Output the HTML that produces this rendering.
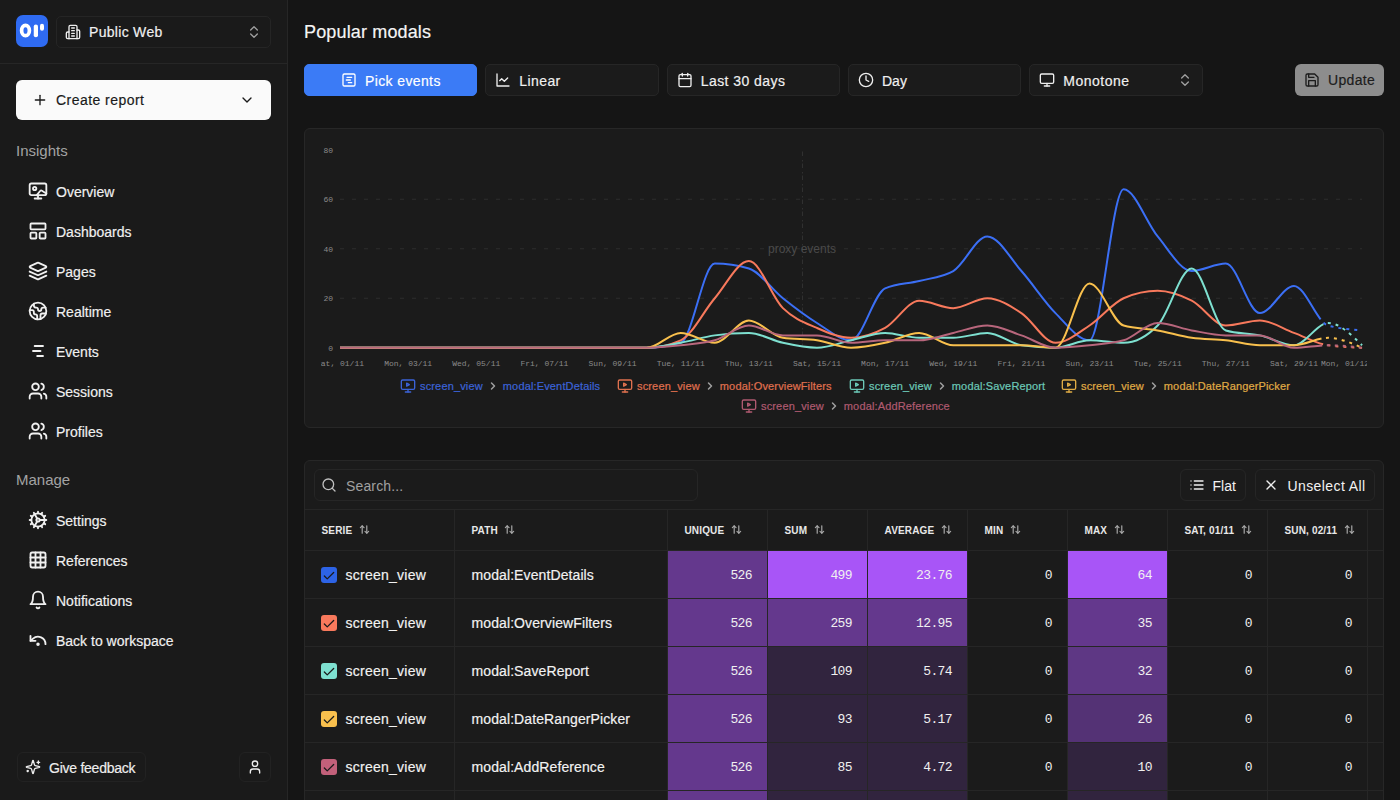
<!DOCTYPE html><html><head><meta charset="utf-8"><style>
*{box-sizing:border-box;margin:0;padding:0}
html,body{width:1400px;height:800px;overflow:hidden;background:#151515;font-family:"Liberation Sans",sans-serif;color:#f2f2f2}
.nav .t,.proj .t,.create .t,.btn .t,.upd .t,.fb .t,#title,.sw{-webkit-text-stroke:0.18px currentColor}
.abs{position:absolute}
svg{display:block}
#side{position:absolute;left:0;top:0;width:288px;height:800px;background:#1a1a1a;border-right:1px solid #262626}
#side .hdr{position:absolute;left:0;top:0;width:287px;height:64px;border-bottom:1px solid #262626}
.logo{position:absolute;left:16px;top:15px;width:32px;height:32px;background:#2f6bf2;border-radius:7px}
.proj{position:absolute;left:56px;top:16px;width:215px;height:32px;border:1px solid #252525;border-radius:5px;background:#1a1a1a}
.proj .ic{position:absolute;left:8px;top:7px;color:#eee}
.proj .t{position:absolute;left:32px;top:6px;font-size:14px;line-height:18px;color:#f0f0f0;letter-spacing:0.3px}
.proj .ud{position:absolute;right:8px;top:6.5px;color:#a0a0a0}
.create{position:absolute;left:16px;top:80px;width:255px;height:40px;background:#fafafa;border-radius:6px;color:#1a1a1a}
.create .ic{position:absolute;left:16px;top:12px}
.create .t{position:absolute;left:40px;top:11px;font-size:14px;line-height:18px}
.create .cd{position:absolute;right:16px;top:12px}
.sec{position:absolute;left:16px;font-size:15px;line-height:18px;color:#a3a3a3}
.nav{position:absolute;left:28px;height:20px}
.nav .ic{position:absolute;left:0;top:0;color:#f0f0f0}
.nav .t{position:absolute;left:28px;top:1.5px;font-size:14px;line-height:18px;color:#f0f0f0;white-space:nowrap}
.fb{position:absolute;left:17px;top:752px;width:129px;height:30px;border:1px solid #222;border-radius:6px}
.fb .ic{position:absolute;left:7px;top:6px;color:#eee}
.fb .t{position:absolute;left:31px;top:6px;font-size:14px;line-height:18px;color:#eee}
.usr{position:absolute;left:239px;top:752px;width:32px;height:30px;border:1px solid #222;border-radius:6px}
.usr .ic{position:absolute;left:7px;top:6px;color:#eee}
#title{position:absolute;left:304px;top:21px;font-size:18px;line-height:22px;color:#f5f5f5;letter-spacing:0.15px}
.btn{position:absolute;top:64px;height:32px;width:173.33px;border:1px solid #262626;border-radius:5px;background:#1b1b1b}
.btn .ic{position:absolute;left:9px;top:7px;color:#eee}
.btn .t{position:absolute;left:33px;top:7px;font-size:14px;line-height:18px;color:#f0f0f0}
.btn .ud{position:absolute;right:8.5px;top:7px;color:#a0a0a0}
.btn.pri{background:#3b7bf6;border-color:#3b7bf6}
.btn.pri .ic{left:36px;color:#fff}
.btn.pri .t{left:60px;color:#fff}
.upd{position:absolute;left:1295px;top:64px;width:89px;height:32px;border-radius:6px;background:#8d8d8d;color:#1c1c1c}
.upd .ic{position:absolute;left:9px;top:8px}
.upd .t{position:absolute;left:33px;top:7px;font-size:14px;line-height:18px}
.card{position:absolute;background:#1b1b1b;border:1px solid #272727;border-radius:6px;overflow:hidden}
.mono{font-family:"Liberation Mono",monospace}
.leg{position:absolute;height:16px;display:flex;align-items:center;font-size:11px;white-space:nowrap;-webkit-text-stroke:0.2px currentColor;letter-spacing:0.15px}
.tb{position:absolute;border-collapse:collapse}
.th,.td{position:absolute;border-right:1px solid #262626}
.hcell{position:absolute;top:0;height:40px;border-right:1px solid #262626;font-size:10px;font-weight:bold;color:#e8e8e8}
.hcell .t{position:absolute;left:16.5px;top:14px;line-height:12px;white-space:nowrap;letter-spacing:0.15px}
.cell{position:absolute;height:47px;border-right:1px solid #262626;background-clip:padding-box}
.num{font-family:"Liberation Mono",monospace;font-size:13px;letter-spacing:-0.6px;color:#f0f0f0;text-align:right;padding-right:15px;padding-top:1px;line-height:47px}
</style></head><body>
<div id="side"><div class="hdr"></div>
<div class="logo"><svg width="32" height="32" viewBox="0 0 32 32"><ellipse cx="9.5" cy="15.5" rx="3.9" ry="5.2" fill="none" stroke="#fff" stroke-width="3.7"/><rect x="17.75" y="9.5" width="4.25" height="12.75" rx="2.1" fill="#fff"/><rect x="24" y="8.75" width="4" height="7" rx="2" fill="#fff"/></svg></div>
<div class="proj"><div class="ic"><svg width="16" height="16" viewBox="0 0 24 24" fill="none" stroke="currentColor" stroke-width="2" stroke-linecap="round" stroke-linejoin="round" ><path d="M6 22V4a2 2 0 0 1 2-2h8a2 2 0 0 1 2 2v18Z"/><path d="M6 12H4a2 2 0 0 0-2 2v6a2 2 0 0 0 2 2h2"/><path d="M18 9h2a2 2 0 0 1 2 2v9a2 2 0 0 1-2 2h-2"/><path d="M10 6h4"/><path d="M10 10h4"/><path d="M10 14h4"/><path d="M10 18h4"/></svg></div><div class="t">Public Web</div><div class="ud"><svg width="16" height="16" viewBox="0 0 24 24" fill="none" stroke="currentColor" stroke-width="2" stroke-linecap="round" stroke-linejoin="round" ><path d="m7 15 5 5 5-5"/><path d="m7 9 5-5 5 5"/></svg></div></div>
<div class="create"><div class="ic"><svg width="16" height="16" viewBox="0 0 24 24" fill="none" stroke="currentColor" stroke-width="2" stroke-linecap="round" stroke-linejoin="round" ><path d="M5 12h14"/><path d="M12 5v14"/></svg></div><div class="t" style="letter-spacing:0.45px">Create report</div><div class="cd"><svg width="16" height="16" viewBox="0 0 24 24" fill="none" stroke="currentColor" stroke-width="2" stroke-linecap="round" stroke-linejoin="round" ><path d="m6 9 6 6 6-6"/></svg></div></div>
<div class="sec" style="top:142px">Insights</div>
<div class="nav" style="top:181px"><div class="ic"><svg width="20" height="20" viewBox="0 0 24 24" fill="none" stroke="currentColor" stroke-width="2.2" stroke-linecap="round" stroke-linejoin="round" ><rect width="20" height="14" x="2" y="3" rx="2"/><circle cx="8" cy="9" r="2"/><path d="m10.5 17 4.3-5.3a1.2 1.2 0 0 1 1.9 0L22 15"/><path d="M8 21h8"/><path d="M12 17v4"/></svg></div><div class="t">Overview</div></div>
<div class="nav" style="top:221px"><div class="ic"><svg width="20" height="20" viewBox="0 0 24 24" fill="none" stroke="currentColor" stroke-width="2.2" stroke-linecap="round" stroke-linejoin="round" ><rect width="18" height="7" x="3" y="3" rx="1"/><rect width="7" height="7" x="3" y="14" rx="1"/><rect width="7" height="7" x="14" y="14" rx="1"/></svg></div><div class="t">Dashboards</div></div>
<div class="nav" style="top:261px"><div class="ic"><svg width="20" height="20" viewBox="0 0 24 24" fill="none" stroke="currentColor" stroke-width="2.2" stroke-linecap="round" stroke-linejoin="round" ><path d="m12.83 2.18a2 2 0 0 0-1.66 0L2.6 6.08a1 1 0 0 0 0 1.83l8.58 3.91a2 2 0 0 0 1.66 0l8.58-3.9a1 1 0 0 0 0-1.83Z"/><path d="m22 17.65-9.17 4.16a2 2 0 0 1-1.66 0L2 17.65"/><path d="m22 12.65-9.17 4.16a2 2 0 0 1-1.66 0L2 12.65"/></svg></div><div class="t">Pages</div></div>
<div class="nav" style="top:301px"><div class="ic"><svg width="20" height="20" viewBox="0 0 24 24" fill="none" stroke="currentColor" stroke-width="2.2" stroke-linecap="round" stroke-linejoin="round" ><path d="M21.54 15H17a2 2 0 0 0-2 2v4.54"/><path d="M7 3.34V5a3 3 0 0 0 3 3a2 2 0 0 1 2 2c0 1.1.9 2 2 2a2 2 0 0 0 2-2c0-1.1.9-2 2-2h3.17"/><path d="M11 21.95V18a2 2 0 0 0-2-2a2 2 0 0 1-2-2v-1a2 2 0 0 0-2-2H2.05"/><circle cx="12" cy="12" r="10"/></svg></div><div class="t">Realtime</div></div>
<div class="nav" style="top:341px"><div class="ic"><svg width="20" height="20" viewBox="0 0 24 24" fill="none" stroke="currentColor" stroke-width="2.2" stroke-linecap="round" stroke-linejoin="round" ><path d="M8 6h10"/><path d="M6 12h9"/><path d="M11 18h7"/></svg></div><div class="t">Events</div></div>
<div class="nav" style="top:381px"><div class="ic"><svg width="20" height="20" viewBox="0 0 24 24" fill="none" stroke="currentColor" stroke-width="2.2" stroke-linecap="round" stroke-linejoin="round" ><path d="M16 21v-2a4 4 0 0 0-4-4H6a4 4 0 0 0-4 4v2"/><circle cx="9" cy="7" r="4"/><path d="M22 21v-2a4 4 0 0 0-3-3.87"/><path d="M16 3.13a4 4 0 0 1 0 7.75"/></svg></div><div class="t">Sessions</div></div>
<div class="nav" style="top:421px"><div class="ic"><svg width="20" height="20" viewBox="0 0 24 24" fill="none" stroke="currentColor" stroke-width="2.2" stroke-linecap="round" stroke-linejoin="round" ><path d="M16 21v-2a4 4 0 0 0-4-4H6a4 4 0 0 0-4 4v2"/><circle cx="9" cy="7" r="4"/><path d="M22 21v-2a4 4 0 0 0-3-3.87"/><path d="M16 3.13a4 4 0 0 1 0 7.75"/></svg></div><div class="t">Profiles</div></div>
<div class="sec" style="top:471px">Manage</div>
<div class="nav" style="top:510px"><div class="ic"><svg width="20" height="20" viewBox="0 0 24 24" fill="none" stroke="currentColor" stroke-width="2.2" stroke-linecap="round" stroke-linejoin="round" ><path d="M12 20a8 8 0 1 0 0-16 8 8 0 0 0 0 16Z"/><path d="M12 14a2 2 0 1 0 0-4 2 2 0 0 0 0 4Z"/><path d="M12 2v2"/><path d="M12 22v-2"/><path d="m17 20.66-1-1.73"/><path d="M11 10.27 7 3.34"/><path d="m20.66 17-1.73-1"/><path d="m3.34 7 1.73 1"/><path d="M14 12h8"/><path d="M2 12h2"/><path d="m20.66 7-1.73 1"/><path d="m3.34 17 1.73-1"/><path d="m17 3.34-1 1.73"/><path d="m11 13.73-4 6.93"/></svg></div><div class="t">Settings</div></div>
<div class="nav" style="top:550px"><div class="ic"><svg width="20" height="20" viewBox="0 0 24 24" fill="none" stroke="currentColor" stroke-width="2.2" stroke-linecap="round" stroke-linejoin="round" ><rect width="18" height="18" x="3" y="3" rx="2"/><path d="M3 9h18"/><path d="M3 15h18"/><path d="M9 3v18"/><path d="M15 3v18"/></svg></div><div class="t">References</div></div>
<div class="nav" style="top:590px"><div class="ic"><svg width="20" height="20" viewBox="0 0 24 24" fill="none" stroke="currentColor" stroke-width="2.2" stroke-linecap="round" stroke-linejoin="round" ><path d="M6 8a6 6 0 0 1 12 0c0 7 3 9 3 9H3s3-2 3-9"/><path d="M10.3 21a1.94 1.94 0 0 0 3.4 0"/></svg></div><div class="t">Notifications</div></div>
<div class="nav" style="top:630px"><div class="ic"><svg width="20" height="20" viewBox="0 0 24 24" fill="none" stroke="currentColor" stroke-width="2.2" stroke-linecap="round" stroke-linejoin="round" ><path d="M21 17a9 9 0 0 0-15-6.7L3 13"/><path d="M3 7v6h6"/><circle cx="12" cy="17" r="1"/></svg></div><div class="t">Back to workspace</div></div>
<div class="fb"><div class="ic"><svg width="16" height="16" viewBox="0 0 24 24" fill="none" stroke="currentColor" stroke-width="2" stroke-linecap="round" stroke-linejoin="round" ><path d="M9.937 15.5A2 2 0 0 0 8.5 14.063l-6.135-1.582a.5.5 0 0 1 0-.962L8.5 9.936A2 2 0 0 0 9.937 8.5l1.582-6.135a.5.5 0 0 1 .963 0L14.063 8.5A2 2 0 0 0 15.5 9.937l6.135 1.581a.5.5 0 0 1 0 .964L15.5 14.063a2 2 0 0 0-1.437 1.437l-1.582 6.135a.5.5 0 0 1-.963 0z"/><path d="M20 3v4"/><path d="M22 5h-4"/><path d="M4 17v2"/><path d="M5 18H3"/></svg></div><div class="t" style="letter-spacing:-0.25px">Give feedback</div></div>
<div class="usr"><div class="ic"><svg width="16" height="16" viewBox="0 0 24 24" fill="none" stroke="currentColor" stroke-width="2" stroke-linecap="round" stroke-linejoin="round" ><path d="M19 21v-2a4 4 0 0 0-4-4H9a4 4 0 0 0-4 4v2"/><circle cx="12" cy="7" r="4"/></svg></div></div>
</div>
<div id="title">Popular modals</div>
<div class="btn pri" style="left:304.00px"><div class="ic"><svg width="16" height="16" viewBox="0 0 24 24" fill="none" stroke="currentColor" stroke-width="2" stroke-linecap="round" stroke-linejoin="round" ><rect width="18" height="18" x="3" y="3" rx="2"/><path d="M9 8h7"/><path d="M8 12h6"/><path d="M11 16h5"/></svg></div><div class="t" style="letter-spacing:0.38px">Pick events</div></div>
<div class="btn" style="left:485.33px"><div class="ic"><svg width="16" height="16" viewBox="0 0 24 24" fill="none" stroke="currentColor" stroke-width="2" stroke-linecap="round" stroke-linejoin="round" ><path d="M3 3v18h18"/><path d="m19 9-5 5-4-4-3 3"/></svg></div><div class="t" style="letter-spacing:0.4px">Linear</div></div>
<div class="btn" style="left:666.67px"><div class="ic"><svg width="16" height="16" viewBox="0 0 24 24" fill="none" stroke="currentColor" stroke-width="2" stroke-linecap="round" stroke-linejoin="round" ><rect width="18" height="18" x="3" y="4" rx="2"/><path d="M16 2v4"/><path d="M8 2v4"/><path d="M3 10h18"/></svg></div><div class="t" style="letter-spacing:0.45px">Last 30 days</div></div>
<div class="btn" style="left:848.00px"><div class="ic"><svg width="16" height="16" viewBox="0 0 24 24" fill="none" stroke="currentColor" stroke-width="2" stroke-linecap="round" stroke-linejoin="round" ><circle cx="12" cy="12" r="10"/><path d="M12 6v6l4 2"/></svg></div><div class="t" style="letter-spacing:0px">Day</div></div>
<div class="btn" style="left:1029.33px"><div class="ic"><svg width="16" height="16" viewBox="0 0 24 24" fill="none" stroke="currentColor" stroke-width="2" stroke-linecap="round" stroke-linejoin="round" ><rect width="20" height="14" x="2" y="3" rx="2"/><path d="M8 21h8"/><path d="M12 17v4"/></svg></div><div class="t" style="letter-spacing:0.5px">Monotone</div><div class="ud"><svg width="16" height="16" viewBox="0 0 24 24" fill="none" stroke="currentColor" stroke-width="2" stroke-linecap="round" stroke-linejoin="round" ><path d="m7 15 5 5 5-5"/><path d="m7 9 5-5 5 5"/></svg></div></div>
<div class="upd"><div class="ic"><svg width="16" height="16" viewBox="0 0 24 24" fill="none" stroke="currentColor" stroke-width="2" stroke-linecap="round" stroke-linejoin="round" ><path d="M19 21H5a2 2 0 0 1-2-2V5a2 2 0 0 1 2-2h11l5 5v11a2 2 0 0 1-2 2z"/><path d="M17 21v-8H7v8"/><path d="M7 3v5h8"/></svg></div><div class="t" style="letter-spacing:0.35px">Update</div></div>
<div class="card" style="left:304px;top:128px;width:1080px;height:300px"></div>
<svg class="abs" style="left:0;top:0" width="1400" height="440" viewBox="0 0 1400 440">
<line x1="340" x2="1362" y1="298.25" y2="298.25" stroke="#2e2e2e" stroke-width="1" stroke-dasharray="4 8"/>
<line x1="340" x2="1362" y1="248.75" y2="248.75" stroke="#2e2e2e" stroke-width="1" stroke-dasharray="4 8"/>
<line x1="340" x2="1362" y1="199.25" y2="199.25" stroke="#2e2e2e" stroke-width="1" stroke-dasharray="4 8"/>
<line x1="802.5" x2="802.5" y1="151.5" y2="347" stroke="#303030" stroke-width="1" stroke-dasharray="4.5 4 1.5 2"/>
<text x="802" y="253" text-anchor="middle" font-family="Liberation Sans" font-size="12" fill="#4a4a4a">proxy events</text>
<text x="333" y="350.75" text-anchor="end" font-family="Liberation Mono" font-size="8" fill="#8a8a8a">0</text>
<text x="333" y="301.25" text-anchor="end" font-family="Liberation Mono" font-size="8" fill="#8a8a8a">20</text>
<text x="333" y="251.75" text-anchor="end" font-family="Liberation Mono" font-size="8" fill="#8a8a8a">40</text>
<text x="333" y="202.25" text-anchor="end" font-family="Liberation Mono" font-size="8" fill="#8a8a8a">60</text>
<text x="333" y="152.75" text-anchor="end" font-family="Liberation Mono" font-size="8" fill="#8a8a8a">80</text>
<clipPath id="xc"><rect x="321" y="350" width="1046" height="20"/></clipPath><g clip-path="url(#xc)">
<text x="340.00" y="366" text-anchor="middle" font-family="Liberation Mono" font-size="8" fill="#8a8a8a">Sat, 01/11</text>
<text x="408.14" y="366" text-anchor="middle" font-family="Liberation Mono" font-size="8" fill="#8a8a8a">Mon, 03/11</text>
<text x="476.28" y="366" text-anchor="middle" font-family="Liberation Mono" font-size="8" fill="#8a8a8a">Wed, 05/11</text>
<text x="544.42" y="366" text-anchor="middle" font-family="Liberation Mono" font-size="8" fill="#8a8a8a">Fri, 07/11</text>
<text x="612.56" y="366" text-anchor="middle" font-family="Liberation Mono" font-size="8" fill="#8a8a8a">Sun, 09/11</text>
<text x="680.70" y="366" text-anchor="middle" font-family="Liberation Mono" font-size="8" fill="#8a8a8a">Tue, 11/11</text>
<text x="748.84" y="366" text-anchor="middle" font-family="Liberation Mono" font-size="8" fill="#8a8a8a">Thu, 13/11</text>
<text x="816.98" y="366" text-anchor="middle" font-family="Liberation Mono" font-size="8" fill="#8a8a8a">Sat, 15/11</text>
<text x="885.12" y="366" text-anchor="middle" font-family="Liberation Mono" font-size="8" fill="#8a8a8a">Mon, 17/11</text>
<text x="953.26" y="366" text-anchor="middle" font-family="Liberation Mono" font-size="8" fill="#8a8a8a">Wed, 19/11</text>
<text x="1021.40" y="366" text-anchor="middle" font-family="Liberation Mono" font-size="8" fill="#8a8a8a">Fri, 21/11</text>
<text x="1089.54" y="366" text-anchor="middle" font-family="Liberation Mono" font-size="8" fill="#8a8a8a">Sun, 23/11</text>
<text x="1157.68" y="366" text-anchor="middle" font-family="Liberation Mono" font-size="8" fill="#8a8a8a">Tue, 25/11</text>
<text x="1225.82" y="366" text-anchor="middle" font-family="Liberation Mono" font-size="8" fill="#8a8a8a">Thu, 27/11</text>
<text x="1293.96" y="366" text-anchor="middle" font-family="Liberation Mono" font-size="8" fill="#8a8a8a">Sat, 29/11</text>
<text x="1369" y="366" text-anchor="end" font-family="Liberation Mono" font-size="8" fill="#8a8a8a">Mon, 01/12</text></g>
<path d="M340.00,347.75 C351.36,347.75 362.71,347.75 374.07,347.75 C385.43,347.75 396.78,347.75 408.14,347.75 C419.50,347.75 430.85,347.75 442.21,347.75 C453.57,347.75 464.92,347.75 476.28,347.75 C487.64,347.75 498.99,347.75 510.35,347.75 C521.71,347.75 533.06,347.75 544.42,347.75 C555.78,347.75 567.13,347.75 578.49,347.75 C589.85,347.75 601.20,347.75 612.56,347.75 C623.92,347.75 635.27,347.75 646.63,347.75 C657.99,347.75 669.34,346.10 680.70,342.80 C692.06,339.50 703.41,263.60 714.77,263.60 C726.13,263.60 737.48,265.25 748.84,268.55 C760.20,271.85 771.55,289.18 782.91,298.25 C794.27,307.32 805.62,315.99 816.98,323.00 C828.34,330.01 839.69,340.32 851.05,340.32 C862.41,340.32 873.76,293.30 885.12,288.35 C896.48,283.40 907.83,283.81 919.19,280.93 C930.55,278.04 941.90,277.62 953.26,271.02 C964.62,264.42 975.97,236.38 987.33,236.38 C998.69,236.38 1010.04,258.24 1021.40,271.02 C1032.76,283.81 1044.11,301.55 1055.47,313.10 C1066.83,324.65 1078.18,340.32 1089.54,340.32 C1100.90,340.32 1112.25,189.35 1123.61,189.35 C1134.97,189.35 1146.32,222.76 1157.68,236.38 C1169.04,249.99 1180.39,271.02 1191.75,271.02 C1203.11,271.02 1214.46,263.60 1225.82,263.60 C1237.18,263.60 1248.53,313.10 1259.89,313.10 C1271.25,313.10 1282.60,285.88 1293.96,285.88 C1305.32,285.88 1316.67,322.18 1328.03,325.48 C1339.39,328.78 1350.74,329.60 1362.10,330.43" fill="none" stroke="#3b6ff5" stroke-width="2" stroke-dasharray="1372.31 4.50 3.00 5.00 3.00 5.00 3.00 5.00 3.00 5.00 3.00 5.00 3.00 5.00 3.00 5.00 3.00 5.00 3.00 5.00 3.00 5.00 3.00 5.00 3.00 5.00 3.00 2000.00"/>
<path d="M340.00,347.75 C351.36,347.75 362.71,347.75 374.07,347.75 C385.43,347.75 396.78,347.75 408.14,347.75 C419.50,347.75 430.85,347.75 442.21,347.75 C453.57,347.75 464.92,347.75 476.28,347.75 C487.64,347.75 498.99,347.75 510.35,347.75 C521.71,347.75 533.06,347.75 544.42,347.75 C555.78,347.75 567.13,347.75 578.49,347.75 C589.85,347.75 601.20,347.75 612.56,347.75 C623.92,347.75 635.27,347.75 646.63,347.75 C657.99,347.75 669.34,345.27 680.70,340.32 C692.06,335.38 703.41,311.45 714.77,298.25 C726.13,285.05 737.48,261.12 748.84,261.12 C760.20,261.12 771.55,297.01 782.91,308.15 C794.27,319.29 805.62,323.00 816.98,327.95 C828.34,332.90 839.69,337.85 851.05,337.85 C862.41,337.85 873.76,334.14 885.12,327.95 C896.48,321.76 907.83,300.73 919.19,300.73 C930.55,300.73 941.90,308.15 953.26,308.15 C964.62,308.15 975.97,298.25 987.33,298.25 C998.69,298.25 1010.04,305.68 1021.40,313.10 C1032.76,320.53 1044.11,342.80 1055.47,342.80 C1066.83,342.80 1078.18,332.90 1089.54,325.48 C1100.90,318.05 1112.25,303.20 1123.61,298.25 C1134.97,293.30 1146.32,290.82 1157.68,290.82 C1169.04,290.82 1180.39,294.95 1191.75,300.73 C1203.11,306.50 1214.46,325.48 1225.82,325.48 C1237.18,325.48 1248.53,320.52 1259.89,320.52 C1271.25,320.52 1282.60,328.77 1293.96,332.90 C1305.32,337.02 1316.67,343.62 1328.03,345.27 C1339.39,346.93 1350.74,347.34 1362.10,347.75" fill="none" stroke="#f8795c" stroke-width="2" stroke-dasharray="1115.10 4.50 3.00 5.00 3.00 5.00 3.00 5.00 3.00 5.00 3.00 5.00 3.00 5.00 3.00 5.00 3.00 5.00 3.00 5.00 3.00 5.00 3.00 5.00 3.00 5.00 3.00 2000.00"/>
<path d="M340.00,347.75 C351.36,347.75 362.71,347.75 374.07,347.75 C385.43,347.75 396.78,347.75 408.14,347.75 C419.50,347.75 430.85,347.75 442.21,347.75 C453.57,347.75 464.92,347.75 476.28,347.75 C487.64,347.75 498.99,347.75 510.35,347.75 C521.71,347.75 533.06,347.75 544.42,347.75 C555.78,347.75 567.13,347.75 578.49,347.75 C589.85,347.75 601.20,347.75 612.56,347.75 C623.92,347.75 635.27,347.75 646.63,347.75 C657.99,347.75 669.34,344.86 680.70,342.80 C692.06,340.74 703.41,337.02 714.77,335.38 C726.13,333.72 737.48,332.90 748.84,332.90 C760.20,332.90 771.55,340.32 782.91,342.80 C794.27,345.28 805.62,347.75 816.98,347.75 C828.34,347.75 839.69,342.80 851.05,340.32 C862.41,337.85 873.76,332.90 885.12,332.90 C896.48,332.90 907.83,337.85 919.19,337.85 C930.55,337.85 941.90,337.85 953.26,337.85 C964.62,337.85 975.97,332.90 987.33,332.90 C998.69,332.90 1010.04,343.62 1021.40,345.27 C1032.76,346.93 1044.11,347.75 1055.47,347.75 C1066.83,347.75 1078.18,340.32 1089.54,340.32 C1100.90,340.32 1112.25,342.80 1123.61,342.80 C1134.97,342.80 1146.32,337.03 1157.68,325.48 C1169.04,313.93 1180.39,268.55 1191.75,268.55 C1203.11,268.55 1214.46,327.12 1225.82,330.43 C1237.18,333.73 1248.53,332.90 1259.89,335.38 C1271.25,337.85 1282.60,345.27 1293.96,345.27 C1305.32,345.27 1316.67,323.00 1328.03,323.00 C1339.39,323.00 1350.74,334.14 1362.10,345.27" fill="none" stroke="#7ee0d0" stroke-width="2" stroke-dasharray="1078.83 4.50 3.00 5.00 3.00 5.00 3.00 5.00 3.00 5.00 3.00 5.00 3.00 5.00 3.00 5.00 3.00 5.00 3.00 5.00 3.00 5.00 3.00 5.00 3.00 5.00 3.00 2000.00"/>
<path d="M340.00,347.75 C351.36,347.75 362.71,347.75 374.07,347.75 C385.43,347.75 396.78,347.75 408.14,347.75 C419.50,347.75 430.85,347.75 442.21,347.75 C453.57,347.75 464.92,347.75 476.28,347.75 C487.64,347.75 498.99,347.75 510.35,347.75 C521.71,347.75 533.06,347.75 544.42,347.75 C555.78,347.75 567.13,347.75 578.49,347.75 C589.85,347.75 601.20,347.75 612.56,347.75 C623.92,347.75 635.27,347.75 646.63,347.75 C657.99,347.75 669.34,332.90 680.70,332.90 C692.06,332.90 703.41,342.80 714.77,342.80 C726.13,342.80 737.48,320.52 748.84,320.52 C760.20,320.52 771.55,336.20 782.91,337.85 C794.27,339.50 805.62,338.68 816.98,340.32 C828.34,341.97 839.69,347.75 851.05,347.75 C862.41,347.75 873.76,345.28 885.12,342.80 C896.48,340.32 907.83,332.90 919.19,332.90 C930.55,332.90 941.90,345.27 953.26,345.27 C964.62,345.27 975.97,345.27 987.33,345.27 C998.69,345.27 1010.04,345.27 1021.40,345.27 C1032.76,345.27 1044.11,347.75 1055.47,347.75 C1066.83,347.75 1078.18,283.40 1089.54,283.40 C1100.90,283.40 1112.25,322.18 1123.61,325.48 C1134.97,328.78 1146.32,328.36 1157.68,330.43 C1169.04,332.49 1180.39,336.20 1191.75,337.85 C1203.11,339.50 1214.46,339.09 1225.82,340.32 C1237.18,341.56 1248.53,345.27 1259.89,345.27 C1271.25,345.27 1282.60,345.27 1293.96,345.27 C1305.32,345.27 1316.67,337.85 1328.03,337.85 C1339.39,337.85 1350.74,342.80 1362.10,347.75" fill="none" stroke="#f9c04d" stroke-width="2" stroke-dasharray="1068.83 4.50 3.00 5.00 3.00 5.00 3.00 5.00 3.00 5.00 3.00 5.00 3.00 5.00 3.00 5.00 3.00 5.00 3.00 5.00 3.00 5.00 3.00 5.00 3.00 5.00 3.00 2000.00"/>
<path d="M340.00,347.75 C351.36,347.75 362.71,347.75 374.07,347.75 C385.43,347.75 396.78,347.75 408.14,347.75 C419.50,347.75 430.85,347.75 442.21,347.75 C453.57,347.75 464.92,347.75 476.28,347.75 C487.64,347.75 498.99,347.75 510.35,347.75 C521.71,347.75 533.06,347.75 544.42,347.75 C555.78,347.75 567.13,347.75 578.49,347.75 C589.85,347.75 601.20,347.75 612.56,347.75 C623.92,347.75 635.27,347.75 646.63,347.75 C657.99,347.75 669.34,346.51 680.70,345.27 C692.06,344.04 703.41,343.62 714.77,340.32 C726.13,337.02 737.48,325.48 748.84,325.48 C760.20,325.48 771.55,335.38 782.91,335.38 C794.27,335.38 805.62,335.38 816.98,335.38 C828.34,335.38 839.69,342.80 851.05,342.80 C862.41,342.80 873.76,340.32 885.12,340.32 C896.48,340.32 907.83,340.32 919.19,340.32 C930.55,340.32 941.90,335.37 953.26,332.90 C964.62,330.42 975.97,325.48 987.33,325.48 C998.69,325.48 1010.04,331.66 1021.40,335.38 C1032.76,339.09 1044.11,347.75 1055.47,347.75 C1066.83,347.75 1078.18,346.51 1089.54,345.27 C1100.90,344.04 1112.25,343.62 1123.61,340.32 C1134.97,337.03 1146.32,323.00 1157.68,323.00 C1169.04,323.00 1180.39,328.36 1191.75,330.43 C1203.11,332.49 1214.46,335.38 1225.82,335.38 C1237.18,335.38 1248.53,335.38 1259.89,335.38 C1271.25,335.38 1282.60,347.75 1293.96,347.75 C1305.32,347.75 1316.67,345.27 1328.03,345.27 C1339.39,345.27 1350.74,346.51 1362.10,347.75" fill="none" stroke="#b8667c" stroke-width="2" stroke-dasharray="1003.47 4.50 3.00 5.00 3.00 5.00 3.00 5.00 3.00 5.00 3.00 5.00 3.00 5.00 3.00 5.00 3.00 5.00 3.00 5.00 3.00 5.00 3.00 5.00 3.00 5.00 3.00 2000.00"/>
</svg>
<div class="leg" style="left:400px;top:378px;color:#3b63d8"><svg width="16" height="16" viewBox="0 0 24 24" fill="none" stroke="#3b63d8" stroke-width="2" stroke-linecap="round" stroke-linejoin="round" ><path d="M10 7.75 14 10 10 12.25z"/><rect width="20" height="14" x="2" y="3" rx="2"/><path d="M12 17v4"/><path d="M8 21h8"/></svg><span style="margin-left:4px">screen_view</span><span style="margin:0 4px 0 4px"><svg width="12" height="12" viewBox="0 0 24 24" fill="none" stroke="#a0a0a0" stroke-width="3" stroke-linecap="round" stroke-linejoin="round" ><path d="m9 18 6-6-6-6"/></svg></span><span>modal:EventDetails</span></div>
<div class="leg" style="left:617px;top:378px;color:#e0714f"><svg width="16" height="16" viewBox="0 0 24 24" fill="none" stroke="#e0714f" stroke-width="2" stroke-linecap="round" stroke-linejoin="round" ><path d="M10 7.75 14 10 10 12.25z"/><rect width="20" height="14" x="2" y="3" rx="2"/><path d="M12 17v4"/><path d="M8 21h8"/></svg><span style="margin-left:4px">screen_view</span><span style="margin:0 4px 0 4px"><svg width="12" height="12" viewBox="0 0 24 24" fill="none" stroke="#a0a0a0" stroke-width="3" stroke-linecap="round" stroke-linejoin="round" ><path d="m9 18 6-6-6-6"/></svg></span><span>modal:OverviewFilters</span></div>
<div class="leg" style="left:849px;top:378px;color:#6cc9b8"><svg width="16" height="16" viewBox="0 0 24 24" fill="none" stroke="#6cc9b8" stroke-width="2" stroke-linecap="round" stroke-linejoin="round" ><path d="M10 7.75 14 10 10 12.25z"/><rect width="20" height="14" x="2" y="3" rx="2"/><path d="M12 17v4"/><path d="M8 21h8"/></svg><span style="margin-left:4px">screen_view</span><span style="margin:0 4px 0 4px"><svg width="12" height="12" viewBox="0 0 24 24" fill="none" stroke="#a0a0a0" stroke-width="3" stroke-linecap="round" stroke-linejoin="round" ><path d="m9 18 6-6-6-6"/></svg></span><span>modal:SaveReport</span></div>
<div class="leg" style="left:1061px;top:378px;color:#e0ac45"><svg width="16" height="16" viewBox="0 0 24 24" fill="none" stroke="#e0ac45" stroke-width="2" stroke-linecap="round" stroke-linejoin="round" ><path d="M10 7.75 14 10 10 12.25z"/><rect width="20" height="14" x="2" y="3" rx="2"/><path d="M12 17v4"/><path d="M8 21h8"/></svg><span style="margin-left:4px">screen_view</span><span style="margin:0 4px 0 4px"><svg width="12" height="12" viewBox="0 0 24 24" fill="none" stroke="#a0a0a0" stroke-width="3" stroke-linecap="round" stroke-linejoin="round" ><path d="m9 18 6-6-6-6"/></svg></span><span>modal:DateRangerPicker</span></div>
<div class="leg" style="left:741px;top:398px;color:#b05a70"><svg width="16" height="16" viewBox="0 0 24 24" fill="none" stroke="#b05a70" stroke-width="2" stroke-linecap="round" stroke-linejoin="round" ><path d="M10 7.75 14 10 10 12.25z"/><rect width="20" height="14" x="2" y="3" rx="2"/><path d="M12 17v4"/><path d="M8 21h8"/></svg><span style="margin-left:4px">screen_view</span><span style="margin:0 4px 0 4px"><svg width="12" height="12" viewBox="0 0 24 24" fill="none" stroke="#a0a0a0" stroke-width="3" stroke-linecap="round" stroke-linejoin="round" ><path d="m9 18 6-6-6-6"/></svg></span><span>modal:AddReference</span></div>
<div class="card" style="left:304px;top:460px;width:1080px;height:400px">
<div class="abs" style="left:9px;top:8px;width:384px;height:32px;border:1px solid #262626;border-radius:6px"><div class="abs" style="left:6px;top:7px;color:#c0c0c0"><svg width="16" height="16" viewBox="0 0 24 24" fill="none" stroke="currentColor" stroke-width="2" stroke-linecap="round" stroke-linejoin="round" ><circle cx="11" cy="11" r="8"/><path d="m21 21-4.3-4.3"/></svg></div><div class="abs" style="left:31px;top:7px;font-size:14px;line-height:18px;color:#a0a0a0;letter-spacing:0.15px">Search...</div></div>
<div class="abs" style="left:874.5px;top:8px;width:66px;height:32px;border:1px solid #262626;border-radius:6px"><div class="abs" style="left:8px;top:7px;color:#eee"><svg width="16" height="16" viewBox="0 0 24 24" fill="none" stroke="currentColor" stroke-width="2" stroke-linecap="round" stroke-linejoin="round" ><path d="M8 6h13"/><path d="M8 12h13"/><path d="M8 18h13"/><path d="M3 6h.01"/><path d="M3 12h.01"/><path d="M3 18h.01"/></svg></div><div class="abs" style="left:32px;top:6.5px;font-size:14px;line-height:18px">Flat</div></div>
<div class="abs" style="left:949.5px;top:8px;width:120px;height:32px;border:1px solid #262626;border-radius:6px"><div class="abs" style="left:7px;top:7px;color:#eee"><svg width="16" height="16" viewBox="0 0 24 24" fill="none" stroke="currentColor" stroke-width="2" stroke-linecap="round" stroke-linejoin="round" ><path d="M18 6 6 18"/><path d="m6 6 12 12"/></svg></div><div class="abs" style="left:32px;top:7px;font-size:14px;line-height:18px;letter-spacing:0.4px">Unselect All</div></div>
<div class="abs" style="left:0;top:48px;width:1080px;height:1px;background:#262626"></div>
<div class="hcell" style="left:0px;top:49px;width:150px"><div class="t">SERIE<span style="display:inline-block;vertical-align:-1px;margin-left:6.5px;color:#aaa"><svg width="11" height="11" viewBox="0 0 24 24" fill="none" stroke="#a8a8a8" stroke-width="2.6" stroke-linecap="round" stroke-linejoin="round" ><path d="m21 16-4 4-4-4"/><path d="M17 20V4"/><path d="m3 8 4-4 4 4"/><path d="M7 4v16"/></svg></span></div></div>
<div class="hcell" style="left:150px;top:49px;width:213px"><div class="t">PATH<span style="display:inline-block;vertical-align:-1px;margin-left:6.5px;color:#aaa"><svg width="11" height="11" viewBox="0 0 24 24" fill="none" stroke="#a8a8a8" stroke-width="2.6" stroke-linecap="round" stroke-linejoin="round" ><path d="m21 16-4 4-4-4"/><path d="M17 20V4"/><path d="m3 8 4-4 4 4"/><path d="M7 4v16"/></svg></span></div></div>
<div class="hcell" style="left:363px;top:49px;width:100px"><div class="t">UNIQUE<span style="display:inline-block;vertical-align:-1px;margin-left:6.5px;color:#aaa"><svg width="11" height="11" viewBox="0 0 24 24" fill="none" stroke="#a8a8a8" stroke-width="2.6" stroke-linecap="round" stroke-linejoin="round" ><path d="m21 16-4 4-4-4"/><path d="M17 20V4"/><path d="m3 8 4-4 4 4"/><path d="M7 4v16"/></svg></span></div></div>
<div class="hcell" style="left:463px;top:49px;width:100px"><div class="t">SUM<span style="display:inline-block;vertical-align:-1px;margin-left:6.5px;color:#aaa"><svg width="11" height="11" viewBox="0 0 24 24" fill="none" stroke="#a8a8a8" stroke-width="2.6" stroke-linecap="round" stroke-linejoin="round" ><path d="m21 16-4 4-4-4"/><path d="M17 20V4"/><path d="m3 8 4-4 4 4"/><path d="M7 4v16"/></svg></span></div></div>
<div class="hcell" style="left:563px;top:49px;width:100px"><div class="t">AVERAGE<span style="display:inline-block;vertical-align:-1px;margin-left:6.5px;color:#aaa"><svg width="11" height="11" viewBox="0 0 24 24" fill="none" stroke="#a8a8a8" stroke-width="2.6" stroke-linecap="round" stroke-linejoin="round" ><path d="m21 16-4 4-4-4"/><path d="M17 20V4"/><path d="m3 8 4-4 4 4"/><path d="M7 4v16"/></svg></span></div></div>
<div class="hcell" style="left:663px;top:49px;width:100px"><div class="t">MIN<span style="display:inline-block;vertical-align:-1px;margin-left:6.5px;color:#aaa"><svg width="11" height="11" viewBox="0 0 24 24" fill="none" stroke="#a8a8a8" stroke-width="2.6" stroke-linecap="round" stroke-linejoin="round" ><path d="m21 16-4 4-4-4"/><path d="M17 20V4"/><path d="m3 8 4-4 4 4"/><path d="M7 4v16"/></svg></span></div></div>
<div class="hcell" style="left:763px;top:49px;width:100px"><div class="t">MAX<span style="display:inline-block;vertical-align:-1px;margin-left:6.5px;color:#aaa"><svg width="11" height="11" viewBox="0 0 24 24" fill="none" stroke="#a8a8a8" stroke-width="2.6" stroke-linecap="round" stroke-linejoin="round" ><path d="m21 16-4 4-4-4"/><path d="M17 20V4"/><path d="m3 8 4-4 4 4"/><path d="M7 4v16"/></svg></span></div></div>
<div class="hcell" style="left:863px;top:49px;width:100px"><div class="t">SAT, 01/11<span style="display:inline-block;vertical-align:-1px;margin-left:6.5px;color:#aaa"><svg width="11" height="11" viewBox="0 0 24 24" fill="none" stroke="#a8a8a8" stroke-width="2.6" stroke-linecap="round" stroke-linejoin="round" ><path d="m21 16-4 4-4-4"/><path d="M17 20V4"/><path d="m3 8 4-4 4 4"/><path d="M7 4v16"/></svg></span></div></div>
<div class="hcell" style="left:963px;top:49px;width:100px"><div class="t">SUN, 02/11<span style="display:inline-block;vertical-align:-1px;margin-left:6.5px;color:#aaa"><svg width="11" height="11" viewBox="0 0 24 24" fill="none" stroke="#a8a8a8" stroke-width="2.6" stroke-linecap="round" stroke-linejoin="round" ><path d="m21 16-4 4-4-4"/><path d="M17 20V4"/><path d="m3 8 4-4 4 4"/><path d="M7 4v16"/></svg></span></div></div>
<div class="hcell" style="left:1063px;top:49px;width:100px"><div class="t">MON, 03/11<span style="display:inline-block;vertical-align:-1px;margin-left:6.5px;color:#aaa"><svg width="11" height="11" viewBox="0 0 24 24" fill="none" stroke="#a8a8a8" stroke-width="2.6" stroke-linecap="round" stroke-linejoin="round" ><path d="m21 16-4 4-4-4"/><path d="M17 20V4"/><path d="m3 8 4-4 4 4"/><path d="M7 4v16"/></svg></span></div></div>
<div class="abs" style="left:0;top:89px;width:1080px;height:1px;background:#262626"></div>
<div class="abs" style="left:0;top:137px;width:1080px;height:1px;background:#262626"></div>
<div class="cell" style="left:0;top:90px;width:150px"><div class="abs" style="left:16px;top:16px;width:16px;height:16px;border-radius:3px;background:#2d63e6"><svg width="14" height="14" viewBox="0 0 24 24" fill="none" stroke="#1a1a1a" stroke-width="2.2" stroke-linecap="round" stroke-linejoin="round" style="margin:1.5px 0 0 1px"><path d="M20 6 9 17l-5-5"/></svg></div><div class="abs sw" style="left:40.5px;top:15px;font-size:14px;line-height:18px;letter-spacing:0.25px">screen_view</div></div>
<div class="cell" style="left:150px;top:90px;width:213px"><div class="abs sw" style="left:16.5px;top:15px;font-size:14px;line-height:18px;letter-spacing:0.1px">modal:EventDetails</div></div>
<div class="cell num" style="left:363px;top:90px;width:100px;background:rgba(168,85,247,0.52);">526</div>
<div class="cell num" style="left:463px;top:90px;width:100px;background:rgba(168,85,247,1.00);">499</div>
<div class="cell num" style="left:563px;top:90px;width:100px;background:rgba(168,85,247,1.00);">23.76</div>
<div class="cell num" style="left:663px;top:90px;width:100px;">0</div>
<div class="cell num" style="left:763px;top:90px;width:100px;background:rgba(168,85,247,1.00);">64</div>
<div class="cell num" style="left:863px;top:90px;width:100px;">0</div>
<div class="cell num" style="left:963px;top:90px;width:100px;">0</div>
<div class="cell" style="left:1063px;top:90px;width:20px"></div>
<div class="abs" style="left:0;top:185px;width:1080px;height:1px;background:#262626"></div>
<div class="cell" style="left:0;top:138px;width:150px"><div class="abs" style="left:16px;top:16px;width:16px;height:16px;border-radius:3px;background:#f8795c"><svg width="14" height="14" viewBox="0 0 24 24" fill="none" stroke="#1a1a1a" stroke-width="2.2" stroke-linecap="round" stroke-linejoin="round" style="margin:1.5px 0 0 1px"><path d="M20 6 9 17l-5-5"/></svg></div><div class="abs sw" style="left:40.5px;top:15px;font-size:14px;line-height:18px;letter-spacing:0.25px">screen_view</div></div>
<div class="cell" style="left:150px;top:138px;width:213px"><div class="abs sw" style="left:16.5px;top:15px;font-size:14px;line-height:18px;letter-spacing:0.1px">modal:OverviewFilters</div></div>
<div class="cell num" style="left:363px;top:138px;width:100px;background:rgba(168,85,247,0.52);">526</div>
<div class="cell num" style="left:463px;top:138px;width:100px;background:rgba(168,85,247,0.52);">259</div>
<div class="cell num" style="left:563px;top:138px;width:100px;background:rgba(168,85,247,0.52);">12.95</div>
<div class="cell num" style="left:663px;top:138px;width:100px;">0</div>
<div class="cell num" style="left:763px;top:138px;width:100px;background:rgba(168,85,247,0.52);">35</div>
<div class="cell num" style="left:863px;top:138px;width:100px;">0</div>
<div class="cell num" style="left:963px;top:138px;width:100px;">0</div>
<div class="cell" style="left:1063px;top:138px;width:20px"></div>
<div class="abs" style="left:0;top:233px;width:1080px;height:1px;background:#262626"></div>
<div class="cell" style="left:0;top:186px;width:150px"><div class="abs" style="left:16px;top:16px;width:16px;height:16px;border-radius:3px;background:#7ee0d0"><svg width="14" height="14" viewBox="0 0 24 24" fill="none" stroke="#1a1a1a" stroke-width="2.2" stroke-linecap="round" stroke-linejoin="round" style="margin:1.5px 0 0 1px"><path d="M20 6 9 17l-5-5"/></svg></div><div class="abs sw" style="left:40.5px;top:15px;font-size:14px;line-height:18px;letter-spacing:0.25px">screen_view</div></div>
<div class="cell" style="left:150px;top:186px;width:213px"><div class="abs sw" style="left:16.5px;top:15px;font-size:14px;line-height:18px;letter-spacing:0.1px">modal:SaveReport</div></div>
<div class="cell num" style="left:363px;top:186px;width:100px;background:rgba(168,85,247,0.52);">526</div>
<div class="cell num" style="left:463px;top:186px;width:100px;background:rgba(168,85,247,0.16);">109</div>
<div class="cell num" style="left:563px;top:186px;width:100px;background:rgba(168,85,247,0.16);">5.74</div>
<div class="cell num" style="left:663px;top:186px;width:100px;">0</div>
<div class="cell num" style="left:763px;top:186px;width:100px;background:rgba(168,85,247,0.48);">32</div>
<div class="cell num" style="left:863px;top:186px;width:100px;">0</div>
<div class="cell num" style="left:963px;top:186px;width:100px;">0</div>
<div class="cell" style="left:1063px;top:186px;width:20px"></div>
<div class="abs" style="left:0;top:281px;width:1080px;height:1px;background:#262626"></div>
<div class="cell" style="left:0;top:234px;width:150px"><div class="abs" style="left:16px;top:16px;width:16px;height:16px;border-radius:3px;background:#f9c04d"><svg width="14" height="14" viewBox="0 0 24 24" fill="none" stroke="#1a1a1a" stroke-width="2.2" stroke-linecap="round" stroke-linejoin="round" style="margin:1.5px 0 0 1px"><path d="M20 6 9 17l-5-5"/></svg></div><div class="abs sw" style="left:40.5px;top:15px;font-size:14px;line-height:18px;letter-spacing:0.25px">screen_view</div></div>
<div class="cell" style="left:150px;top:234px;width:213px"><div class="abs sw" style="left:16.5px;top:15px;font-size:14px;line-height:18px;letter-spacing:0.1px">modal:DateRangerPicker</div></div>
<div class="cell num" style="left:363px;top:234px;width:100px;background:rgba(168,85,247,0.52);">526</div>
<div class="cell num" style="left:463px;top:234px;width:100px;background:rgba(168,85,247,0.16);">93</div>
<div class="cell num" style="left:563px;top:234px;width:100px;background:rgba(168,85,247,0.16);">5.17</div>
<div class="cell num" style="left:663px;top:234px;width:100px;">0</div>
<div class="cell num" style="left:763px;top:234px;width:100px;background:rgba(168,85,247,0.41);">26</div>
<div class="cell num" style="left:863px;top:234px;width:100px;">0</div>
<div class="cell num" style="left:963px;top:234px;width:100px;">0</div>
<div class="cell" style="left:1063px;top:234px;width:20px"></div>
<div class="abs" style="left:0;top:329px;width:1080px;height:1px;background:#262626"></div>
<div class="cell" style="left:0;top:282px;width:150px"><div class="abs" style="left:16px;top:16px;width:16px;height:16px;border-radius:3px;background:#c2607a"><svg width="14" height="14" viewBox="0 0 24 24" fill="none" stroke="#1a1a1a" stroke-width="2.2" stroke-linecap="round" stroke-linejoin="round" style="margin:1.5px 0 0 1px"><path d="M20 6 9 17l-5-5"/></svg></div><div class="abs sw" style="left:40.5px;top:15px;font-size:14px;line-height:18px;letter-spacing:0.25px">screen_view</div></div>
<div class="cell" style="left:150px;top:282px;width:213px"><div class="abs sw" style="left:16.5px;top:15px;font-size:14px;line-height:18px;letter-spacing:0.1px">modal:AddReference</div></div>
<div class="cell num" style="left:363px;top:282px;width:100px;background:rgba(168,85,247,0.52);">526</div>
<div class="cell num" style="left:463px;top:282px;width:100px;background:rgba(168,85,247,0.16);">85</div>
<div class="cell num" style="left:563px;top:282px;width:100px;background:rgba(168,85,247,0.16);">4.72</div>
<div class="cell num" style="left:663px;top:282px;width:100px;">0</div>
<div class="cell num" style="left:763px;top:282px;width:100px;background:rgba(168,85,247,0.16);">10</div>
<div class="cell num" style="left:863px;top:282px;width:100px;">0</div>
<div class="cell num" style="left:963px;top:282px;width:100px;">0</div>
<div class="cell" style="left:1063px;top:282px;width:20px"></div>
<div class="abs" style="left:0;top:377px;width:1080px;height:1px;background:#262626"></div>
<div class="cell" style="left:0;top:330px;width:150px"><div class="abs" style="left:16px;top:16px;width:16px;height:16px;border-radius:3px;background:#888"><svg width="14" height="14" viewBox="0 0 24 24" fill="none" stroke="#1a1a1a" stroke-width="2.2" stroke-linecap="round" stroke-linejoin="round" style="margin:1.5px 0 0 1px"><path d="M20 6 9 17l-5-5"/></svg></div><div class="abs sw" style="left:40.5px;top:15px;font-size:14px;line-height:18px;letter-spacing:0.25px">screen_view</div></div>
<div class="cell" style="left:150px;top:330px;width:213px"><div class="abs sw" style="left:16.5px;top:15px;font-size:14px;line-height:18px;letter-spacing:0.1px"></div></div>
<div class="cell num" style="left:363px;top:330px;width:100px;background:rgba(168,85,247,0.52);"></div>
<div class="cell num" style="left:463px;top:330px;width:100px;background:rgba(168,85,247,0.16);"></div>
<div class="cell num" style="left:563px;top:330px;width:100px;background:rgba(168,85,247,0.16);"></div>
<div class="cell num" style="left:663px;top:330px;width:100px;"></div>
<div class="cell num" style="left:763px;top:330px;width:100px;background:rgba(168,85,247,0.16);"></div>
<div class="cell num" style="left:863px;top:330px;width:100px;"></div>
<div class="cell num" style="left:963px;top:330px;width:100px;"></div>
<div class="cell" style="left:1063px;top:330px;width:20px"></div>
</div>
</body></html>
